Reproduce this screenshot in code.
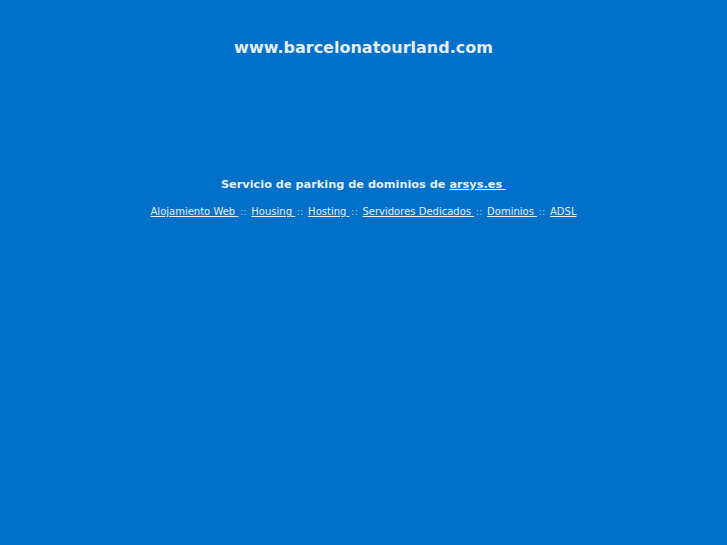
function Sep() {
  return <span className="mx-[1.5px] text-[#a9c3dc]">::</span>;
}

export default function App() {
  const links = ["Alojamiento Web", "Housing", "Hosting", "Servidores Dedicados", "Dominios", "ADSL"];
  return (
    <div className="min-h-[545px] w-full bg-[#0070c9] text-[#e6eef6] text-center" style={{ fontFamily: '"DejaVu Sans", Verdana, sans-serif' }}>
      <div className="pt-[37px] text-[16px] font-bold leading-[22px]">www.barcelonatourland.com</div>
      <div className="mt-[118px] text-[11.3px] font-bold leading-[16px]">
        Servicio de parking de dominios de <a href="#" className="underline">arsys.es&nbsp;</a>
      </div>
      <div className="mt-[12px] text-[10px] leading-[14px]">
        {links.map((l, i) => (
          <span key={l}>
            <a href="#" className="underline">{l}{i < links.length - 1 ? "\u00a0" : ""}</a>
            {i < links.length - 1 && (
              <>
                <Sep />{" "}
              </>
            )}
          </span>
        ))}
      </div>
    </div>
  );
}
